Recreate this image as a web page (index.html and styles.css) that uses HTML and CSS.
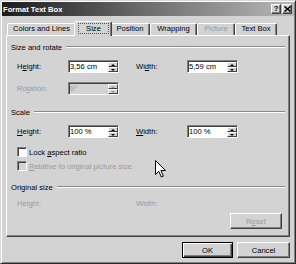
FILE: index.html
```html
<!DOCTYPE html>
<html>
<head>
<meta charset="utf-8">
<title>Format Text Box</title>
<link rel="stylesheet" href="styles.css">
</head>
<body>
<div class="window">
  <div class="titlebar">
    <span class="title">Format Text Box</span>
    <div class="tbtns">
      <span class="tbtn help">?</span>
      <span class="tbtn close"><svg width="7" height="6" viewBox="0 0 7 6"><path d="M0.5 0.5 L6.5 5.5 M6.5 0.5 L0.5 5.5" stroke="#000" stroke-width="1.5"/></svg></span>
    </div>
  </div>
  <div class="client">
    <div class="tabs">
      <div class="tab t-colors">Colors and Lines</div>
      <div class="tab t-size active"><span class="focus">Size</span></div>
      <div class="tab t-position">Position</div>
      <div class="tab t-wrapping">Wrapping</div>
      <div class="tab t-picture dis">Picture</div>
      <div class="tab t-textbox">Text Box</div>
    </div>
    <div class="panel">
      <div class="ghead g1"><span>Size and rotate</span><i class="rule"></i></div>
      <div class="frow r1">
        <span class="lbl">H<u>e</u>ight:</span>
        <div class="spin"><span class="val">3,56 cm</span><span class="arrows"><b class="up"></b><b class="dn"></b></span></div>
        <span></span>
        <span class="lbl">Wi<u>d</u>th:</span>
        <div class="spin"><span class="val">5,59 cm</span><span class="arrows"><b class="up"></b><b class="dn"></b></span></div>
      </div>
      <div class="frow r2">
        <span class="lbl dis">Ro<u>t</u>ation:</span>
        <div class="spin off"><span class="val">0°</span><span class="arrows"><b class="up"></b><b class="dn"></b></span></div>
      </div>
      <div class="ghead g2"><span>Scale</span><i class="rule"></i></div>
      <div class="frow r3">
        <span class="lbl"><u>H</u>eight:</span>
        <div class="spin"><span class="val">100 %</span><span class="arrows"><b class="up"></b><b class="dn"></b></span></div>
        <span></span>
        <span class="lbl"><u>W</u>idth:</span>
        <div class="spin"><span class="val">100 %</span><span class="arrows"><b class="up"></b><b class="dn"></b></span></div>
      </div>
      <div class="check c1"><span class="box"></span><span>Lock <u>a</u>spect ratio</span></div>
      <div class="check c2 dis"><span class="box off"></span><span><u>R</u>elative to original picture size</span></div>
      <div class="ghead g3"><span>Original size</span><i class="rule"></i></div>
      <div class="frow r4 dis">
        <span class="lbl">Height:</span>
        <span></span>
        <span></span>
        <span class="lbl">Width:</span>
        <span></span>
      </div>
      <div class="reset-row"><button class="btn reset">R<u>e</u>set</button></div>
    </div>
    <div class="footer">
      <button class="btn default">OK</button>
      <button class="btn cancel">Cancel</button>
    </div>
  </div>
  <svg class="cursor" width="12" height="18" viewBox="0 0 12 18"><path d="M0.5 0.5 L0.5 14.5 L3.8 11.3 L6.3 17 L8.3 16.1 L5.9 10.5 L10.5 10.5 Z" fill="#fff" stroke="#000" stroke-width="1" stroke-linejoin="miter"/></svg>
</div>
</body>
</html>
```
FILE: styles.css
```css
* { box-sizing: border-box; }
html, body { margin: 0; padding: 0; }
body {
  width: 296px;
  height: 264px;
  overflow: hidden;
  background: #d3d3d3;
  font-family: "Liberation Sans", Arial, sans-serif;
  font-size: 7.6px;
  line-height: 9px;
  color: #000;
}
u { text-decoration: underline; text-underline-offset: 1px; }
.window {
  position: relative;
  width: 296px;
  height: 264px;
  border: 1px solid;
  border-color: #d8d8d8 #2c2c2c #2c2c2c #d8d8d8;
  box-shadow: inset 1px 1px #ffffff, inset -1px -1px #808080;
  padding: 1px;
  display: flex;
  flex-direction: column;
}
.titlebar {
  height: 14px;
  flex: none;
  display: flex;
  align-items: center;
  justify-content: space-between;
  padding: 0 2px 0 1px;
  background: linear-gradient(to right, #1c1c1c 0%, #6e6e6e 50%, #b8b8b8 100%);
}
.title { color: #fff; font-weight: bold; font-size: 7.6px; }
.tbtns { display: flex; gap: 1px; }
.tbtn {
  width: 10px;
  height: 10px;
  background: #d3d3d3;
  border: 1px solid;
  border-color: #fff #404040 #404040 #fff;
  box-shadow: inset -1px -1px #808080;
  display: flex;
  align-items: center;
  justify-content: center;
  font-weight: bold;
  font-size: 7.5px;
  line-height: 8px;
}
.client {
  flex: 1;
  display: flex;
  flex-direction: column;
  padding: 5px 4px 0 4px;
}
.tabs {
  height: 14px;
  display: flex;
  padding-left: 1px;
  position: relative;
  z-index: 1;
}
.tab {
  height: 12px;
  margin-top: 2px;
  padding: 0;
  border: 1px solid;
  border-bottom: none;
  border-color: #fff #404040 transparent #fff;
  box-shadow: inset -1px 0 #808080;
  border-radius: 2px 2px 0 0;
  line-height: 10px;
  white-space: nowrap;
  text-align: center;
  flex: none;
}
.t-colors { width: 69px; }
.t-size { width: 34px; }
.t-position { width: 40px; }
.t-wrapping { width: 47px; }
.t-picture { width: 38px; }
.t-textbox { width: 42px; }
.tab.active {
  width: 38px;
  height: 15px;
  margin: 0 -2px;
  padding: 0 2px 0 3px;
  background: #d3d3d3;
  position: relative;
  z-index: 2;
}
.focus {
  display: block;
  margin-top: 1px;
  height: 11px;
  border: 1px dotted #555;
  line-height: 9px;
}
.tab.dis { color: #9a9a9a; }
.panel {
  height: 202px;
  flex: none;
  border: 1px solid;
  border-color: #fff #404040 #404040 #fff;
  box-shadow: inset -1px -1px #808080;
  padding: 0 4px;
  display: flex;
  flex-direction: column;
}
.ghead {
  height: 10px;
  display: flex;
  align-items: center;
  gap: 4px;
}
.rule {
  flex: 1;
  height: 2px;
  border-top: 1px solid #8a8a8a;
  border-bottom: 1px solid #fff;
}
.g1 { margin-top: 6px; }
.g2 { margin-top: 12px; }
.g3 { margin-top: 11px; }
.frow {
  display: grid;
  grid-template-columns: 51px 51px 17px 51px 51px;
  align-items: center;
  height: 13px;
  padding-left: 6px;
}
.r1 { margin-top: 8px; }
.r2 { margin-top: 9px; }
.r3 { margin-top: 8px; }
.r4 { margin-top: 6px; height: 10px; }
.dis { color: #9a9a9a; }
.spin {
  height: 13px;
  border: 1px solid;
  border-color: #808080 #fff #fff #808080;
  box-shadow: inset 1px 1px #404040;
  background: #fff;
  display: flex;
  align-items: stretch;
}
.spin.off { background: #d3d3d3; color: #9a9a9a; }
.val { flex: 1; padding-left: 1px; line-height: 11px; }
.arrows {
  width: 10px;
  margin: 1px 0 0 0;
  display: flex;
  flex-direction: column;
}
.arrows b {
  flex: 1;
  background: #d3d3d3;
  border: 1px solid;
  border-color: #fff #404040 #404040 #fff;
  display: flex;
  align-items: center;
  justify-content: center;
}
.arrows b::after {
  content: "";
  width: 0;
  height: 0;
  border-left: 2px solid transparent;
  border-right: 2px solid transparent;
}
.arrows .up::after { border-bottom: 2px solid #000; }
.arrows .dn::after { border-top: 2px solid #000; }
.spin.off .arrows .up::after { border-bottom-color: #9a9a9a; }
.spin.off .arrows .dn::after { border-top-color: #9a9a9a; }
.check {
  display: flex;
  align-items: center;
  gap: 2px;
  height: 10px;
  padding-left: 6px;
}
.c1 { margin-top: 9px; }
.c2 { margin-top: 4px; }
.box {
  width: 10px;
  height: 10px;
  border: 1px solid;
  border-color: #808080 #fff #fff #808080;
  box-shadow: inset 1px 1px #404040;
  background: #fff;
}
.box.off { background: #d3d3d3; }
.reset-row {
  margin-top: 5px;
  display: flex;
  justify-content: flex-end;
  padding-right: 3px;
}
.btn {
  height: 16px;
  padding: 0;
  margin: 0;
  font: inherit;
  line-height: 13px;
  color: #000;
  background: #d3d3d3;
  border: 1px solid;
  border-color: #fff #404040 #404040 #fff;
  box-shadow: inset -1px -1px #808080;
}
.reset { width: 52px; color: #9a9a9a; }
.footer {
  display: flex;
  justify-content: flex-end;
  gap: 4px;
  padding-top: 5px;
}
.default {
  width: 51px;
  border-color: #000;
  box-shadow: inset 1px 1px #fff, inset -1px -1px #404040, inset -2px -2px #808080;
}
.cancel { width: 53px; }
.cursor {
  position: absolute;
  left: 154px;
  top: 159px;
}
```
